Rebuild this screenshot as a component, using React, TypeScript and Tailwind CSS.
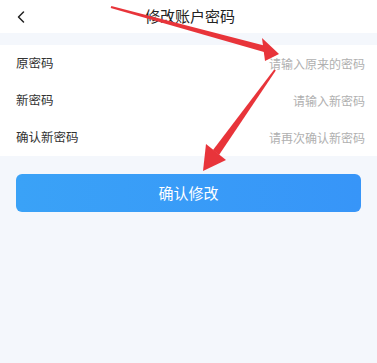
import { ChevronLeft } from "lucide-react";

const rows = [
  { label: "原密码", placeholder: "请输入原来的密码" },
  { label: "新密码", placeholder: "请输入新密码" },
  { label: "确认新密码", placeholder: "请再次确认新密码" },
];

export default function App() {
  return (
    <div
      className="relative w-[377px] h-[363px] bg-[#f4f7fc] overflow-hidden"
      style={{ fontFamily: '"Noto Sans CJK SC", "Noto Sans", sans-serif' }}
    >
      {/* Header */}
      <div className="h-[33px] bg-white flex items-center relative">
        <ChevronLeft size={20} strokeWidth={1.8} className="ml-[11px] text-[#222]" />
        <div className="absolute inset-0 flex items-center justify-center text-[15px] text-[#222] pl-[3px]">
          修改账户密码
        </div>
      </div>

      {/* Form */}
      <div className="mt-[12px] bg-white">
        {rows.map((r) => (
          <div key={r.label} className="h-[37px] flex items-center justify-between pl-[16px] pr-[12px]">
            <span className="text-[12.5px] text-[#333]">{r.label}</span>
            <input
              className="text-right text-[12px] w-[160px] outline-none placeholder:text-[#b0b0b0] bg-transparent"
              placeholder={r.placeholder}
            />
          </div>
        ))}
      </div>

      {/* Submit */}
      <div className="px-[16px] mt-[18px]">
        <button className="w-full h-[38px] rounded-[6px] bg-gradient-to-r from-[#3aa2f7] to-[#3795f8] text-white text-[15px]">
          确认修改
        </button>
      </div>

      {/* Annotation arrows */}
      <svg className="absolute inset-0 pointer-events-none" width="377" height="363" viewBox="0 0 377 363">
        <polygon points="110.7,8 111.3,6 266,46 264,52" fill="#e8343a" />
        <polygon points="262,38 279,54 265,61" fill="#e8343a" />
        <polygon points="274.2,69.4 275.8,70.6 219,155 213,150" fill="#e8343a" />
        <polygon points="206,144 226,160 203,171" fill="#e8343a" />
      </svg>
    </div>
  );
}
